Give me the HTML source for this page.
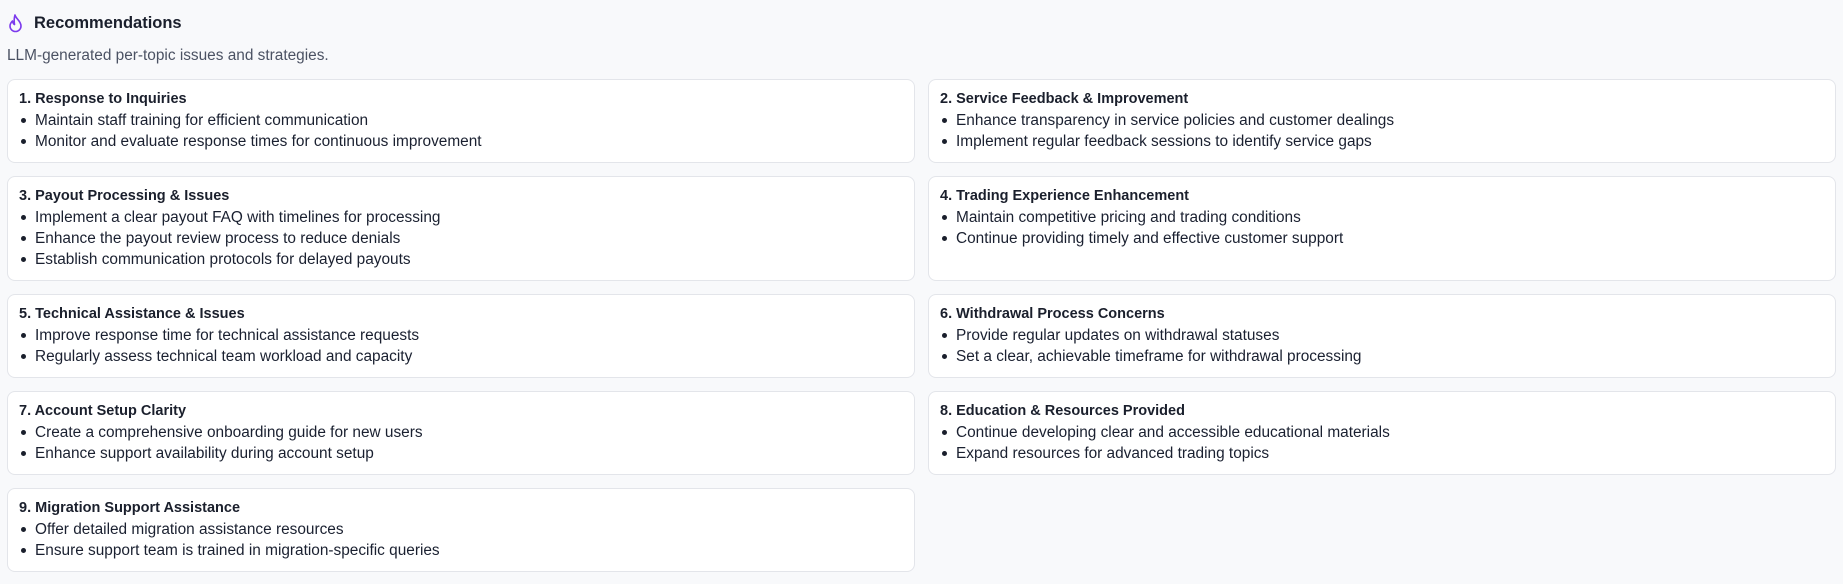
<!DOCTYPE html>
<html><head><meta charset="utf-8"><style>
*{box-sizing:border-box;margin:0;padding:0}
body{width:1843px;height:584px;background:#f8f9fb;font-family:"Liberation Sans",sans-serif;color:#1a2030;position:relative;overflow:hidden}
.h{position:absolute;left:8px;top:13px;display:flex;align-items:center}
.h span{font-size:16.5px;font-weight:bold;margin-left:10px;color:#1a1f2c}
.sub{position:absolute;left:7px;top:47px;font-size:15.4px;color:#4b5263}
.grid{position:absolute;left:7px;top:79px;width:1829px;display:grid;grid-template-columns:908px 908px;column-gap:13px;row-gap:13px}
.c{background:#fff;border:1px solid #e3e5ea;border-radius:8px;padding:9px 11px 10px 11px;font-size:15.4px;line-height:21px}
.c b{display:block;font-weight:bold;color:#1a1f2c;font-size:14.5px}
.c div{position:relative;padding-left:16px}
.c div:before{content:"";position:absolute;left:2px;top:8px;width:5px;height:5px;border-radius:50%;background:#1a1f2c}
</style></head><body>
<div class="h"><svg width="16" height="20" viewBox="0 0 16 20"><path d="M7 2 C8 6 13 8 13 13 A5.5 5.5 0 0 1 2 13 C2 10.5 3.5 9 4.5 8 C4.8 10 5.5 11 6.5 11.5 C6 8 6 5 7 2 Z" fill="none" stroke="#7c3aed" stroke-width="1.6" stroke-linejoin="round"/></svg><span>Recommendations</span></div>
<div class="sub">LLM-generated per-topic issues and strategies.</div>
<div class="grid">
<div class="c"><b>1. Response to Inquiries</b><div>Maintain staff training for efficient communication</div><div>Monitor and evaluate response times for continuous improvement</div></div>
<div class="c"><b>2. Service Feedback &amp; Improvement</b><div>Enhance transparency in service policies and customer dealings</div><div>Implement regular feedback sessions to identify service gaps</div></div>
<div class="c"><b>3. Payout Processing &amp; Issues</b><div>Implement a clear payout FAQ with timelines for processing</div><div>Enhance the payout review process to reduce denials</div><div>Establish communication protocols for delayed payouts</div></div>
<div class="c"><b>4. Trading Experience Enhancement</b><div>Maintain competitive pricing and trading conditions</div><div>Continue providing timely and effective customer support</div></div>
<div class="c"><b>5. Technical Assistance &amp; Issues</b><div>Improve response time for technical assistance requests</div><div>Regularly assess technical team workload and capacity</div></div>
<div class="c"><b>6. Withdrawal Process Concerns</b><div>Provide regular updates on withdrawal statuses</div><div>Set a clear, achievable timeframe for withdrawal processing</div></div>
<div class="c"><b>7. Account Setup Clarity</b><div>Create a comprehensive onboarding guide for new users</div><div>Enhance support availability during account setup</div></div>
<div class="c"><b>8. Education &amp; Resources Provided</b><div>Continue developing clear and accessible educational materials</div><div>Expand resources for advanced trading topics</div></div>
<div class="c"><b>9. Migration Support Assistance</b><div>Offer detailed migration assistance resources</div><div>Ensure support team is trained in migration-specific queries</div></div>
</div>
</body></html>
